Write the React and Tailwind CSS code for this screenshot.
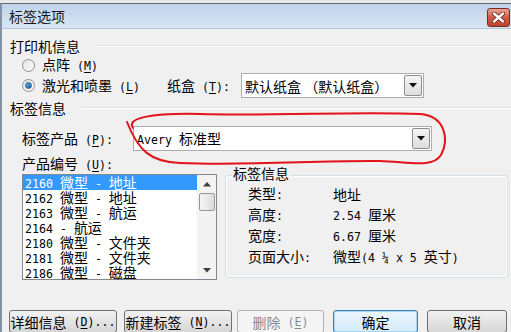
import React from "react";

// splits a label into half-width runs (mono, SimSun-like) and CJK runs; "_X" underlines X
function Txt({ s }) {
  const parts = s.match(/[\x20-\x7e¼]+|[^\x20-\x7e¼]+/g) || [];
  return parts.map((p, i) => {
    if (/^[\x20-\x7e¼]/.test(p)) {
      const bits = p.split(/_(.)/);
      return (
        <span key={i} className="font-['DejaVu_Sans_Mono',monospace] text-[11.6px]">
          {bits.map((b, j) => (j % 2 === 1 ? <span key={j} className="underline underline-offset-2">{b}</span> : b))}
        </span>
      );
    }
    return <span key={i}>{p}</span>;
  });
}

function Arrow() {
  return (
    <svg width="8" height="5" viewBox="0 0 8 5">
      <path d="M0 0 H8 L4 4.5 Z" fill="#111" />
    </svg>
  );
}

function DropBtn() {
  return (
    <div className="w-[18px] h-full flex items-center justify-center border border-[#8d8d8d] rounded-[2px] bg-gradient-to-b from-[#f4f4f4] to-[#dedede]">
      <Arrow />
    </div>
  );
}

function Radio({ checked }) {
  return (
    <div className="w-[13px] h-[13px] rounded-full border border-[#8e8f8f] bg-gradient-to-br from-[#e4e4e4] to-[#fbfbfb] flex items-center justify-center">
      {checked && <div className="w-[7px] h-[7px] rounded-full bg-gradient-to-br from-[#5fb4ee] to-[#1c5aa3] border border-[#2c628b]" />}
    </div>
  );
}

function Button({ label, wide, disabled, focus }) {
  const base = "h-[23px] flex items-center justify-center rounded-[3px] leading-[18px] whitespace-pre ";
  let look = "border border-[#707070] bg-gradient-to-b from-[#f2f2f2] to-[#d6d6d6]";
  if (disabled) look = "border border-[#adb2b5] bg-[#f4f4f4] text-[#8a8a8a]";
  if (focus) look = "border border-[#3c7fb1] bg-gradient-to-b from-[#eaf6fd] to-[#d3ebfa] shadow-[inset_0_0_0_1px_#a6d6f4]";
  return (
    <div className={base + look + " " + wide}>
      <Txt s={label} />
    </div>
  );
}

const items = [
  "2160 微型 - 地址",
  "2162 微型 - 地址",
  "2163 微型 - 航运",
  "2164 - 航运",
  "2180 微型 - 文件夹",
  "2181 微型 - 文件夹",
  "2186 微型 - 磁盘",
];

const info = [
  ["类型:", "地址"],
  ["高度:", "2.54 厘米"],
  ["宽度:", "6.67 厘米"],
  ["页面大小:", "微型(4 ¼ x 5 英寸)"],
];

export default function App() {
  return (
    <div className="relative w-[511px] h-[332px] overflow-hidden bg-[#e8e8e8] pt-[3px] font-['Noto_Sans_CJK_SC',sans-serif] text-[14px] text-black">
      <div className="h-[329px] border-t border-[#5f6873] border-l-2 border-l-[#8394a6] bg-[#f0f0f0]">
        {/* title bar */}
        <div className="h-[25px] flex items-center justify-between border-b border-[#b3c5d8] bg-gradient-to-b from-[#bfd4eb] to-[#d9e6f3] pl-[7px] pr-[1px]">
          <span className="leading-[18px] text-[#1a1a1a]">标签选项</span>
          <div className="w-[23px] h-[19px] mt-[2px] rounded-[3px] border border-[#7a2c22] bg-gradient-to-b from-[#e8a595] via-[#cf5a45] to-[#c0442f] flex items-center justify-center">
            <svg width="13" height="11" viewBox="0 0 13 11">
              <path d="M2 1.5 L11 9.5 M11 1.5 L2 9.5" stroke="#6b2319" strokeWidth="4" strokeLinecap="round" />
              <path d="M2 1.5 L11 9.5 M11 1.5 L2 9.5" stroke="#fff" strokeWidth="2.4" strokeLinecap="round" />
            </svg>
          </div>
        </div>

        <div className="pl-[8px] whitespace-pre">
          {/* printer section */}
          <div className="mt-[8px] h-[18px] flex items-center leading-[18px]">
            <span>打印机信息</span>
            <div className="ml-[13px] flex-1 h-[2px] border-t border-[#dbe1e6] border-b border-b-white" />
          </div>
          <div className="mt-[2px] h-[16px] ml-[12px] flex items-center gap-[7px] leading-[16px]">
            <Radio />
            <span><Txt s="点阵 (_M)" /></span>
          </div>
          <div className="h-[25px] ml-[12px] flex items-center leading-[18px]">
            <div className="w-[145px] flex items-center gap-[7px]">
              <Radio checked />
              <span><Txt s="激光和喷墨 (_L)" /></span>
            </div>
            <div className="w-[74px]"><Txt s="纸盒 (_T):" /></div>
            <div className="w-[183px] h-[25px] flex items-center justify-between border border-[#abadb3] bg-white pl-[3px] p-[1px]">
              <span>默认纸盒 （默认纸盒）</span>
              <DropBtn />
            </div>
          </div>

          {/* label section */}
          <div className="mt-[1px] h-[18px] flex items-center leading-[18px]">
            <span>标签信息</span>
            <div className="ml-[15px] flex-1 h-[2px] border-t border-[#dbe1e6] border-b border-b-white" />
          </div>
          <div className="mt-[9px] h-[25px] ml-[12px] flex items-center leading-[18px]">
            <div className="w-[111px]"><Txt s="标签产品 (_P):" /></div>
            <div className="w-[299px] h-[25px] flex items-center justify-between border border-[#abadb3] bg-white pl-[3px] p-[1px]">
              <span><Txt s="Avery 标准型" /></span>
              <DropBtn />
            </div>
          </div>

          <div className="mt-[3px] ml-[12px] flex items-start gap-[8px]">
            <div className="w-[195px]">
              <div className="h-[18px] leading-[18px]"><Txt s="产品编号 (_U):" /></div>
              <div className="mt-[2px] h-[106px] border border-[#828790] bg-white flex">
                <div className="flex-1">
                  {items.map((it, i) => (
                    <div key={i} className={"h-[15px] leading-[15px] pl-[2px] " + (i === 0 ? "bg-[#3399ff] text-white" : "")}>
                      <Txt s={it} />
                    </div>
                  ))}
                </div>
                <div className="w-[19px] bg-[#f3f3f3] flex flex-col items-center pt-[1px]">
                  <div className="h-[17px] flex items-center justify-center">
                    <svg width="8" height="5" viewBox="0 0 8 5"><path d="M0 4.5 H8 L4 0 Z" fill="#3d3d3d" /></svg>
                  </div>
                  <div className="w-[16px] h-[18px] rounded-[2px] border border-[#979797] bg-gradient-to-r from-[#f5f5f5] to-[#dcdcdc]" />
                  <div className="flex-1" />
                  <div className="h-[17px] flex items-center justify-center">
                    <svg width="8" height="5" viewBox="0 0 8 5"><path d="M0 0 H8 L4 4.5 Z" fill="#3d3d3d" /></svg>
                  </div>
                </div>
              </div>
            </div>

            <div className="relative mt-[21px] w-[283px] h-[103px] rounded-[3px] border border-[#d5dfe5] shadow-[inset_0_0_0_1px_#ffffff] pt-[7px] pl-[22px]">
              <span className="absolute -top-[12px] left-[6px] px-[1px] bg-[#f0f0f0] leading-[18px]">标签信息</span>
              {info.map(([k, v]) => (
                <div key={k} className="h-[21px] flex items-center leading-[18px]">
                  <div className="w-[85px]"><Txt s={k} /></div>
                  <div><Txt s={v} /></div>
                </div>
              ))}
            </div>
          </div>

          {/* buttons */}
          <div className="mt-[30px] -ml-[1px] flex">
            <Button label="详细信息 (_D)..." wide="w-[108px]" />
            <div className="w-[7px]" />
            <Button label="新建标签 (_N)..." wide="w-[108px]" />
            <div className="w-[5px]" />
            <Button label="删除 (_E)" wide="w-[87px]" disabled />
            <div className="w-[9px]" />
            <Button label="确定" wide="w-[85px]" focus />
            <div className="w-[9px]" />
            <Button label="取消" wide="w-[80px]" />
          </div>
        </div>
      </div>

      {/* hand-drawn red mark over the screenshot */}
      <svg className="absolute inset-0 pointer-events-none" width="511" height="332" viewBox="0 0 511 332">
        <path
          d="M133 128 C126 118 150 113 200 114 C280 116 360 111 420 114 C446 116 449 140 441 155 C433 168 410 162 380 161 C320 160 250 166 180 163 C150 162 138 150 127 122"
          fill="none"
          stroke="#e3121b"
          strokeWidth="2"
          strokeLinecap="round"
        />
      </svg>
    </div>
  );
}
